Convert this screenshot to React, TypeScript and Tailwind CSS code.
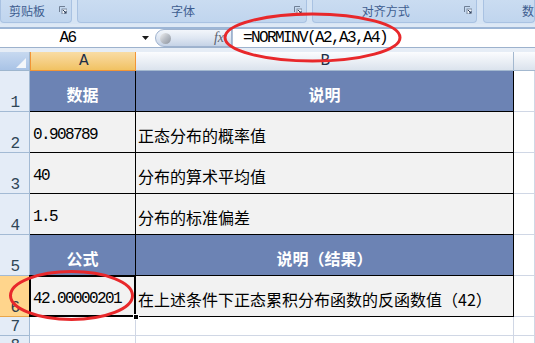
import React from "react";

const mono = "font-['Liberation_Mono','Noto_Sans_CJK_SC',monospace] tracking-[-1.6px]";
const cjk = "font-['Noto_Sans_CJK_SC',sans-serif]";

function Launcher() {
  return (
    <svg width="8" height="8" viewBox="0 0 8 8" className="block">
      <path d="M0.5 6 V0.5 H6" stroke="#6f7f95" strokeWidth="1" fill="none" />
      <rect x="3" y="3" width="5" height="5" fill="#f4f7fb" stroke="#7a8aa0" strokeWidth="1" />
      <path d="M4 4 L7 7 M5 7 H7 V5" stroke="#2d4160" strokeWidth="1" fill="none" />
    </svg>
  );
}

function Group({ label, className, launcher = true }: { label: string; className: string; launcher?: boolean }) {
  return (
    <div
      className={`flex h-[23px] items-center rounded-b-[4px] border border-t-0 border-[#a9c2e2] bg-gradient-to-b from-[#cadcf1] to-[#c0d5ee] ${className}`}
    >
      <div className={`flex-1 text-center text-[12px] leading-[14px] text-[#3e5d8f] ${cjk}`}>{label}</div>
      {launcher && (
        <div className="flex w-[18px] justify-end pr-[4px] pb-[2px]">
          <Launcher />
        </div>
      )}
    </div>
  );
}

function RowHead({ n, active = false, h }: { n: number; active?: boolean; h: string }) {
  return (
    <div
      className={`flex ${h} items-end justify-center border-b border-r pb-[1px] text-[16px] leading-[14px] ${mono} ${
        active
          ? "border-[#e9a64a] bg-[#ffd58c] text-[#2f3c4c]"
          : "border-[#a3bad4] bg-[#e4ecf7] text-[#2f4656]"
      }`}
    >
      {n}
    </div>
  );
}

function Head({ text, className }: { text: string; className: string }) {
  return (
    <div
      className={`flex items-center justify-center border-b border-r border-black bg-[#6c83b4] pt-[6px] text-[16px] font-bold leading-[18px] text-white ${cjk} ${className}`}
    >
      {text}
    </div>
  );
}

function Data({ children, font, className = "" }: { children: React.ReactNode; font: string; className?: string }) {
  return (
    <div
      className={`flex items-center border-b border-r border-black bg-[#f2f2f2] pt-[6px] text-[16px] leading-[18px] text-black ${font} ${className}`}
    >
      {children}
    </div>
  );
}

function Empty({ h }: { h: string }) {
  return <div className={`${h} border-b border-r border-[#d0d7e5] bg-white`} />;
}

export default function App() {
  return (
    <div className="relative h-[343px] w-[535px] overflow-hidden bg-white">
      {/* Ribbon group label strip */}
      <div className="flex h-[24px] bg-[#d6e4f4]">
        <Group label="剪贴板" className="w-[72px]" />
        <div className="w-[5px]" />
        <Group label="字体" className="w-[231px]" />
        <div className="w-[5px]" />
        <Group label="对齐方式" className="w-[165px]" />
        <div className="w-[6px]" />
        <Group label="数" className="flex-1 justify-start pl-[38px]" launcher={false} />
      </div>
      <div className="h-[3px] bg-[#dde8f5]" />
      <div className="h-[2px] bg-[#9db6d6]" />

      {/* Formula bar */}
      <div className="flex h-[18px] bg-white">
        <div className="relative flex w-[155px] items-center">
          <div className={`w-[135px] text-center text-[16px] leading-[16px] text-black ${mono}`}>A6</div>
          <svg width="8" height="5" viewBox="0 0 8 5" className="ml-[7px]">
            <path d="M0 0 H7 L3.5 4 Z" fill="#1a1a1a" />
          </svg>
        </div>
        <div className="flex w-[77px] items-center rounded-l-full border border-[#9fb3cf] bg-gradient-to-b from-[#f3f6fb] via-[#dfe7f2] to-[#c5d3e6]">
          <div className="ml-[4px] h-[11px] w-[11px] rounded-full bg-gradient-to-br from-[#f2f2f2] via-[#b9bec6] to-[#8d949e]" />
          <div className="flex-1" />
          <div className="mr-[7px] font-['Liberation_Serif',serif] text-[14px] italic leading-[14px] text-[#5a6270]">fx</div>
        </div>
        <div className={`flex flex-1 items-center border-l border-[#aebfd6] pl-[10px] text-[16px] leading-[16px] text-black ${mono}`}>
          =NORMINV(A2,A3,A4)
        </div>
      </div>
      <div className="h-px bg-[#9db2cd]" />
      <div className="h-[4px] bg-[#e6edf6]" />

      {/* Sheet grid */}
      <div className="grid grid-cols-[30px_106px_378px_1fr]">
        {/* column headers */}
        <div className="relative h-[19px] border-b border-r border-[#9eb6ce] bg-gradient-to-b from-[#c7d9f0] to-[#a9c3e6]">
          <svg width="10" height="10" viewBox="0 0 10 10" className="absolute bottom-[2px] right-[3px]">
            <path d="M10 0 V10 H0 Z" fill="#f3f6fa" />
          </svg>
        </div>
        <div className={`flex h-[19px] items-center justify-center border-b border-l border-r border-[#f29536] bg-gradient-to-b from-[#f9dca4] to-[#f1c262] text-[16px] leading-[14px] text-[#1e2f47] ${mono}`}>
          A
        </div>
        <div className={`flex h-[19px] items-center justify-center border-b border-r border-[#a3b8cf] bg-gradient-to-b from-[#fbfcfe] to-[#dbe3ed] text-[16px] leading-[14px] text-[#1e2f47] ${mono}`}>
          B
        </div>
        <div className="h-[19px] border-b border-[#a3b8cf] bg-gradient-to-b from-[#fbfcfe] to-[#dbe3ed]" />

        {/* row 1 */}
        <RowHead n={1} h="h-[41px]" />
        <Head text="数据" className="h-[41px]" />
        <Head text="说明" className="h-[41px]" />
        <Empty h="h-[41px]" />

        {/* row 2 */}
        <RowHead n={2} h="h-[41px]" />
        <Data font={mono} className="h-[41px] pl-[3px]">0.908789</Data>
        <Data font={cjk} className="h-[41px] pl-[2px]">正态分布的概率值</Data>
        <Empty h="h-[41px]" />

        {/* row 3 */}
        <RowHead n={3} h="h-[41px]" />
        <Data font={mono} className="h-[41px] pl-[3px]">40</Data>
        <Data font={cjk} className="h-[41px] pl-[2px]">分布的算术平均值</Data>
        <Empty h="h-[41px]" />

        {/* row 4 */}
        <RowHead n={4} h="h-[41px]" />
        <Data font={mono} className="h-[41px] pl-[3px]">1.5</Data>
        <Data font={cjk} className="h-[41px] pl-[2px]">分布的标准偏差</Data>
        <Empty h="h-[41px]" />

        {/* row 5 */}
        <RowHead n={5} h="h-[41px]" />
        <Head text="公式" className="h-[41px]" />
        <Head text="说明（结果）" className="h-[41px]" />
        <Empty h="h-[41px]" />

        {/* row 6 */}
        <RowHead n={6} active h="h-[41px]" />
        <Data font={mono} className="relative h-[41px] pl-[3px]">
          42.00000201
          <div className="pointer-events-none absolute -left-[1px] -top-[1px] h-[42px] w-[107px] border-2 border-black" />
          <div className="absolute -bottom-[4px] -right-[4px] h-[6px] w-[6px] border border-white bg-black" />
        </Data>
        <Data font={cjk} className="h-[41px] pl-[2px]">在上述条件下正态累积分布函数的反函数值（42）</Data>
        <Empty h="h-[41px]" />

        {/* row 7 */}
        <RowHead n={7} h="h-[19px]" />
        <Empty h="h-[19px]" />
        <Empty h="h-[19px]" />
        <Empty h="h-[19px]" />

        {/* row 8 */}
        <RowHead n={8} h="h-[19px]" />
        <Empty h="h-[19px]" />
        <Empty h="h-[19px]" />
        <Empty h="h-[19px]" />
      </div>

      {/* Red annotation ellipses */}
      <svg className="pointer-events-none absolute left-0 top-0" width="535" height="343" viewBox="0 0 535 343">
        <ellipse cx="312.5" cy="37.5" rx="87.5" ry="23.5" fill="none" stroke="#e8282b" strokeWidth="3" />
        <ellipse cx="71.5" cy="295.5" rx="61" ry="24" fill="none" stroke="#e8282b" strokeWidth="3" />
      </svg>
    </div>
  );
}
